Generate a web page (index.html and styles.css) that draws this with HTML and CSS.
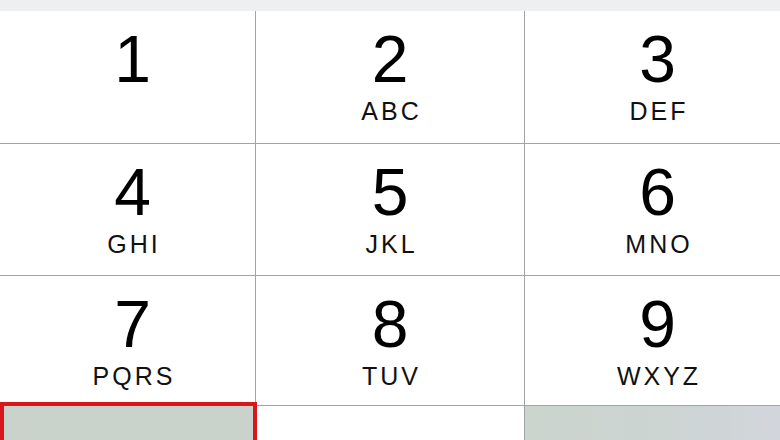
FILE: index.html
```html
<!DOCTYPE html>
<html>
<head>
<meta charset="utf-8">
<link rel="stylesheet" href="styles.css">
</head>
<body>
<div class="screen">
  <div class="strip"></div>
  <div class="pad">
    <div class="key side"><span class="digit">1</span><span class="letters"></span></div>
    <div class="key"><span class="digit">2</span><span class="letters">ABC</span></div>
    <div class="key side"><span class="digit">3</span><span class="letters">DEF</span></div>
    <div class="key side"><span class="digit">4</span><span class="letters">GHI</span></div>
    <div class="key"><span class="digit">5</span><span class="letters">JKL</span></div>
    <div class="key side"><span class="digit">6</span><span class="letters">MNO</span></div>
    <div class="key side"><span class="digit">7</span><span class="letters">PQRS</span></div>
    <div class="key"><span class="digit">8</span><span class="letters">TUV</span></div>
    <div class="key side"><span class="digit">9</span><span class="letters">WXYZ</span></div>
    <div class="key action"></div>
    <div class="key"></div>
    <div class="key action right"></div>
  </div>
  <div class="highlight"></div>
</div>
</body>
</html>
```
FILE: styles.css
```css
html, body {
  margin: 0;
  padding: 0;
}
body {
  width: 780px;
  height: 440px;
  overflow: hidden;
  font-family: "Liberation Sans", Arial, sans-serif;
  background: #ffffff;
}
.screen {
  position: relative;
  width: 780px;
  height: 440px;
  display: flex;
  flex-direction: column;
}
.strip {
  height: 11px;
  background: #eeeff1;
  flex: none;
}
.pad {
  flex: 1;
  display: grid;
  grid-template-columns: 255px 268px 1fr;
  grid-template-rows: 132px 131px 129px 1fr;
  gap: 1px;
  background: #a3a3a3;
}
.key {
  background: #ffffff;
  display: flex;
  flex-direction: column;
  align-items: center;
  color: #000000;
}
.key.side {
  padding-left: 10px;
}
.digit {
  font-size: 66px;
  line-height: 1;
  margin-top: 15px;
  font-weight: 400;
}
.letters {
  font-size: 25px;
  letter-spacing: 3px;
  margin-left: 3px;
  line-height: 1;
  margin-top: 7px;
  color: #111111;
}
.action {
  background: #c9d3cc;
}
.action.right {
  background: linear-gradient(90deg, #cad5cd 0%, #cdd4d3 60%, #d2d6dc 100%);
}
.highlight {
  position: absolute;
  left: 0;
  top: 402px;
  width: 257px;
  height: 50px;
  box-sizing: border-box;
  border: 4px solid #d8161b;
}
```
